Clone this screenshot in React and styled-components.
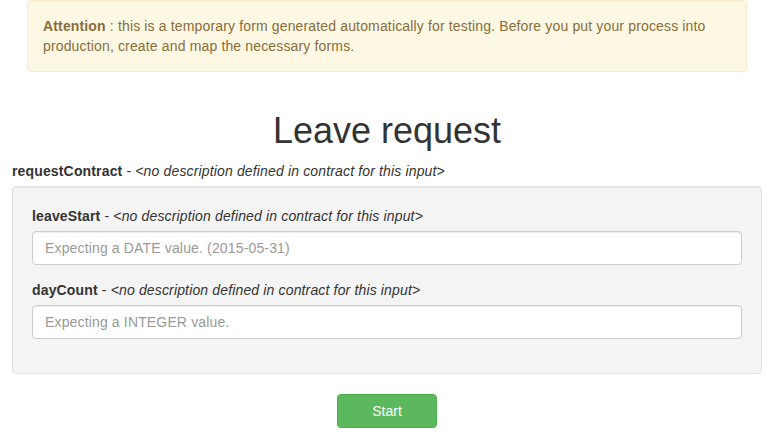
import React from "react";
import styled, { createGlobalStyle } from "styled-components";

const GlobalStyle = createGlobalStyle`
	body {
		margin: 0;
		background: #fff;
		font-family: "Liberation Sans", Arial, sans-serif;
		font-size: 14px;
		line-height: 20px;
		letter-spacing: 0.15px;
		color: #333;
	}
	* { box-sizing: border-box; }
`

const Page = styled.div`
	width: 750px;
	margin-left: 12px;
	display: flex;
	flex-direction: column;
`

const Alert = styled.div`
	margin: 0 15px;
	padding: 15px;
	background: #fcf8e3;
	border: 1px solid #faebcc;
	border-radius: 4px;
	color: #8a6d3b;
	b { font-weight: bold; }
`

const Title = styled.h1`
	margin: 39px 0 10px;
	text-align: center;
	font-size: 36px;
	line-height: 39.6px;
	font-weight: 500;
	letter-spacing: 0;
	color: #333;
`

const Label = styled.div`
	margin-bottom: 5px;
	b { font-weight: bold; }
	i { font-style: italic; }
`

const Well = styled.div`
	padding: 19px 19px 34px;
	background: #f4f4f4;
	border: 1px solid #e3e3e3;
	border-radius: 4px;
	box-shadow: inset 0 1px 1px rgba(0, 0, 0, 0.05);
	display: flex;
	flex-direction: column;
	gap: 15px;
`

const Field = styled.div`
	display: flex;
	flex-direction: column;
`

const Input = styled.input`
	height: 34px;
	padding: 6px 12px;
	font-family: inherit;
	font-size: 14px;
	letter-spacing: 0.15px;
	color: #555;
	background: #fff;
	border: 1px solid #ccc;
	border-radius: 4px;
	box-shadow: inset 0 1px 1px rgba(0, 0, 0, 0.075);
	&::placeholder { color: #999; }
`

const Footer = styled.div`
	display: flex;
	justify-content: center;
	margin-top: 20px;
`

const Button = styled.button`
	width: 100px;
	height: 34px;
	font-family: inherit;
	font-size: 14px;
	color: #fff;
	background: #5cb85c;
	border: 1px solid #4cae4c;
	border-radius: 4px;
`

const Description = ({ name }) => (
	<Label>
		<b>{name}</b> - <i>&lt;no description defined in contract for this input&gt;</i>
	</Label>
)

const fields = [
	{ name: "leaveStart", placeholder: "Expecting a DATE value. (2015-05-31)" },
	{ name: "dayCount", placeholder: "Expecting a INTEGER value." },
]

export default function App() {
	return (
		<>
			<GlobalStyle />
			<Page>
				<Alert>
					<b>Attention</b> : this is a temporary form generated automatically for testing. Before you put your process into production, create and map the necessary forms.
				</Alert>
				<Title>Leave request</Title>
				<Description name="requestContract" />
				<Well>
					{fields.map(f => (
						<Field key={f.name}>
							<Description name={f.name} />
							<Input type="text" placeholder={f.placeholder} />
						</Field>
					))}
				</Well>
				<Footer>
					<Button type="button">Start</Button>
				</Footer>
			</Page>
		</>
	)
}
